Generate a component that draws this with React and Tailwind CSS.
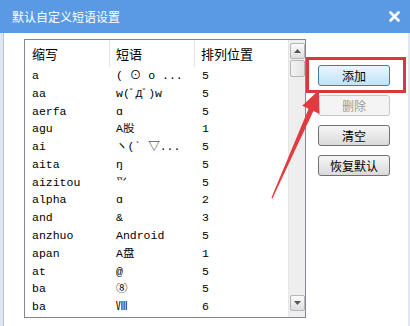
import React from "react";

const rows = [
  ["a", "( ⊙ o ...", "5"],
  ["aa", "w(ﾟДﾟ)w", "5"],
  ["aerfa", "ɑ", "5"],
  ["agu", "A股", "1"],
  ["ai", "ヽ(ˋ ▽...", "5"],
  ["aita", "ŋ", "5"],
  ["aizitou", "爫", "5"],
  ["alpha", "ɑ", "2"],
  ["and", "&", "3"],
  ["anzhuo", "Android", "5"],
  ["apan", "A盘", "1"],
  ["at", "@", "5"],
  ["ba", "⑧", "5"],
  ["ba", "Ⅷ", "6"],
];

const cjk = { fontFamily: '"Noto Sans CJK SC", "Liberation Sans", sans-serif' };
const mono = { fontFamily: '"Liberation Mono", "Noto Sans CJK SC", monospace' };

function Btn({ children, variant }) {
  if (variant === "focus") {
    return (
      <div className="w-[72px] h-[21px] rounded-[3px] border border-[#3c7fb1] bg-gradient-to-b from-[#eaf6fd] to-[#bfe3f8] flex items-center justify-center text-[12px] text-black">
        {children}
      </div>
    );
  }
  if (variant === "disabled") {
    return (
      <div className="w-[72px] h-[21px] rounded-[3px] border border-[#c4c8cc] bg-[#f4f4f4] flex items-center justify-center text-[12px] text-[#9a9a9a]">
        {children}
      </div>
    );
  }
  return (
    <div className="w-[72px] h-[21px] rounded-[3px] border border-[#707070] bg-gradient-to-b from-[#f6f6f6] to-[#dadada] flex items-center justify-center text-[12px] text-black">
      {children}
    </div>
  );
}

function ScrollBtn({ down }) {
  return (
    <div className="w-[15px] h-[16px] rounded-[2px] border border-[#b5b5b5] bg-gradient-to-b from-[#fbfbfb] to-[#dedede] flex items-center justify-center">
      <svg width="7" height="4" viewBox="0 0 7 4">
        {down ? (
          <polygon points="0,0 7,0 3.5,4" fill="#555" />
        ) : (
          <polygon points="0,4 7,4 3.5,0" fill="#555" />
        )}
      </svg>
    </div>
  );
}

export default function App() {
  return (
    <div className="w-[410px] h-[326px] relative bg-white overflow-hidden" style={cjk}>
      {/* title bar */}
      <div className="h-[33px] bg-[#5a9ae5] flex items-center justify-between pl-[12px] pr-[10px]">
        <span className="text-white text-[12px] leading-none">默认自定义短语设置</span>
        <svg width="11" height="11" viewBox="0 0 11 11">
          <path d="M1.5 1.5 L9.5 9.5 M9.5 1.5 L1.5 9.5" stroke="#fff" strokeWidth="2.6" strokeLinecap="round" />
        </svg>
      </div>

      {/* body */}
      <div className="h-[293px] flex border-l-[3px] border-r-[2px] border-[#dfe8f2]">
        <div className="w-px bg-[#b9c6d6]" />
        <div className="flex pl-[20px] pt-[6px]">
          {/* list box */}
          <div className="w-[282px] h-[279px] border border-[#828790] flex bg-white">
            <div className="flex-1 flex flex-col overflow-hidden">
              <div className="h-[27px] flex shrink-0 text-[13px] text-black">
                <div className="w-[85px] pl-[7px] flex items-center border-r border-[#e3e3e3]">缩写</div>
                <div className="w-[85px] pl-[6px] flex items-center border-r border-[#e3e3e3]">短语</div>
                <div className="flex-1 pl-[6px] flex items-center">排列位置</div>
              </div>
              <div className="flex-1 overflow-hidden">
                {rows.map((r, i) => (
                  <div key={i} className="h-[17.77px] flex items-center text-[11.5px] text-black leading-none" style={mono}>
                    <div className="w-[85px] pl-[7px] whitespace-nowrap overflow-hidden">{r[0]}</div>
                    <div className="w-[85px] pl-[6px] whitespace-nowrap overflow-hidden">{r[1]}</div>
                    <div className="flex-1 pl-[7px]">{r[2]}</div>
                  </div>
                ))}
              </div>
            </div>
            {/* scrollbar */}
            <div className="w-[17px] bg-[#eeeeee] flex flex-col items-center pt-[3px] pb-[6px] border-l border-[#e6e6e6]">
              <ScrollBtn />
              <div className="w-[15px] h-[17px] mt-[1px] rounded-[2px] border border-[#b5b5b5] bg-gradient-to-r from-[#f4f4f4] to-[#e2e2e2]" />
              <div className="flex-1" />
              <ScrollBtn down />
            </div>
          </div>

          {/* buttons */}
          <div className="flex flex-col gap-[9px] pl-[12px] pt-[26px]">
            <Btn variant="focus">添加</Btn>
            <Btn variant="disabled">删除</Btn>
            <Btn>清空</Btn>
            <Btn>恢复默认</Btn>
          </div>
        </div>
      </div>

      {/* annotation: red box */}
      <div className="absolute left-[306px] top-[57px] w-[100px] h-[36px] border-[3px] border-[#d8373e]" />

      {/* annotation: red arrow */}
      <svg className="absolute left-0 top-0 pointer-events-none" width="410" height="326" viewBox="0 0 410 326">
        <polygon
          points="319,90 319.5,114 313.4,111 272.6,198.3 271.4,197.7 308.6,108.8 302.2,105.8"
          fill="#e23b3f"
        />
      </svg>
    </div>
  );
}
